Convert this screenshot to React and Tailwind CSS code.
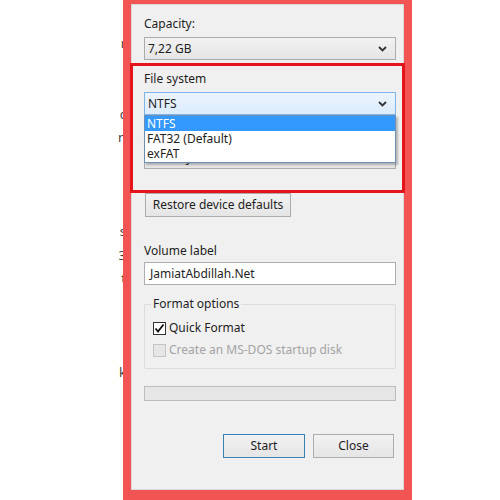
import React from "react";

const font = { fontFamily: '"Noto Sans", "Open Sans", sans-serif' };

const Chevron = () => (
  <svg width="9" height="6" viewBox="0 0 9 6" className="shrink-0">
    <path d="M1 1 L4.5 4.5 L8 1" fill="none" stroke="#333" strokeWidth="1.8" />
  </svg>
);

const Select = ({ value, focused }) => (
  <div
    className={
      "h-[23px] flex items-center justify-between pl-[3px] pr-[8px] border " +
      (focused
        ? "border-[#7eb4ea] bg-gradient-to-b from-[#ecf4fc] to-[#dcecfc]"
        : "border-[#acacac] bg-gradient-to-b from-[#f2f2f2] to-[#e5e5e5]")
    }
  >
    <span>{value}</span>
    <Chevron />
  </div>
);

const Button = ({ children, className = "" }) => (
  <div
    className={
      "h-[24px] flex items-center justify-center border bg-gradient-to-b from-[#f2f2f2] to-[#e5e5e5] " +
      className
    }
  >
    {children}
  </div>
);

const fragments = ["r", "", "", "c", "n", "l", ":", "'", "s", "3", "t", ".", ".", "", "k"];

export default function App() {
  return (
    <div className="w-[500px] h-[500px] bg-white flex overflow-hidden text-[12px] text-[#1e1e1e]" style={font}>
      {/* text behind the window, cut off */}
      <div className="w-[123px] shrink-0 overflow-hidden flex flex-col items-end pt-[32px] leading-[23.5px] text-[13px] text-[#444]">
        {fragments.map((c, i) => (
          <div key={i} className="h-[23.5px] -mr-[3px]">{c}</div>
        ))}
      </div>

      {/* dialog window */}
      <div className="w-[289px] shrink-0 h-[500px] border-x-[8px] border-t-[4px] border-b-[10px] border-[#f25454]">
        <div className="h-full bg-[#f0f0f0] border border-[#d9d9d9] pl-[12px] pr-[7px] pt-[9px] flex flex-col">
          <div className="h-[20px] leading-[20px]">Capacity:</div>
          <div className="mt-[3px]">
            <Select value="7,22 GB" />
          </div>

          {/* highlighted area */}
          <div className="relative mt-[3px] -ml-[14px] -mr-[9px] border-[3px] border-[#e5141b] pl-[11px] pr-[6px] pt-[3px] h-[130px]">
            <div className="h-[20px] leading-[20px]">File system</div>
            <div className="relative mt-[3px]">
              <Select value="NTFS" focused />
              <div className="absolute left-0 right-0 top-[23px] z-10 bg-white border border-[#6d8fb3] shadow-[2px_2px_2px_rgba(0,0,0,0.25)] leading-[15px]">
                <div className="bg-[#3399ff] text-white pl-[2px] h-[15px]">NTFS</div>
                <div className="pl-[2px] h-[15px]">FAT32 (Default)</div>
                <div className="pl-[2px] h-[16px]">exFAT</div>
              </div>
            </div>
            <div className="h-[20px] leading-[20px] mt-[10px]">Allocation unit size</div>
            <div className="mt-[1px]">
              <Select value="4096 bytes" />
            </div>
          </div>

          <Button className="ml-[1px] w-[146px] border-[#acacac]">Restore device defaults</Button>

          <div className="h-[20px] leading-[20px] mt-[24px]">Volume label</div>
          <div className="h-[23px] mt-[1px] bg-white border border-[#abadb3] flex items-center pl-[5px]">
            JamiatAbdillah.Net
          </div>

          {/* format options group */}
          <div className="relative mt-[19px] h-[65px] border border-[#dcdcdc] rounded-[2px] pl-[8px] pt-[10px]">
            <div className="absolute -top-[10px] left-[6px] px-[2px] bg-[#f0f0f0] leading-[18px]">Format options</div>
            <div className="flex items-center gap-[3px] h-[22px] mt-[2px]">
              <div className="w-[13px] h-[13px] border border-[#333] bg-white flex items-center justify-center">
                <svg width="11" height="11" viewBox="0 0 11 11">
                  <path d="M1.5 5.5 L4 8.5 L9.5 1.5" fill="none" stroke="#111" strokeWidth="1.8" />
                </svg>
              </div>
              <span>Quick Format</span>
            </div>
            <div className="flex items-center gap-[3px] h-[22px] text-[#a3a3a3]">
              <div className="w-[13px] h-[13px] border border-[#c4c4c4] bg-[#e6e6e6]" />
              <span>Create an MS-DOS startup disk</span>
            </div>
          </div>

          {/* progress */}
          <div className="mt-[17px] h-[15px] border border-[#bcbcbc] bg-[#e6e6e6]" />

          <div className="mt-[33px] flex justify-end gap-[8px] pr-[2px]">
            <Button className="w-[82px] border-[#3c7fb1] bg-gradient-to-b from-[#eef3f8] to-[#e2e9f0]">Start</Button>
            <Button className="w-[81px] border-[#acacac]">Close</Button>
          </div>
        </div>
      </div>

      <div className="flex-1" />
    </div>
  );
}
